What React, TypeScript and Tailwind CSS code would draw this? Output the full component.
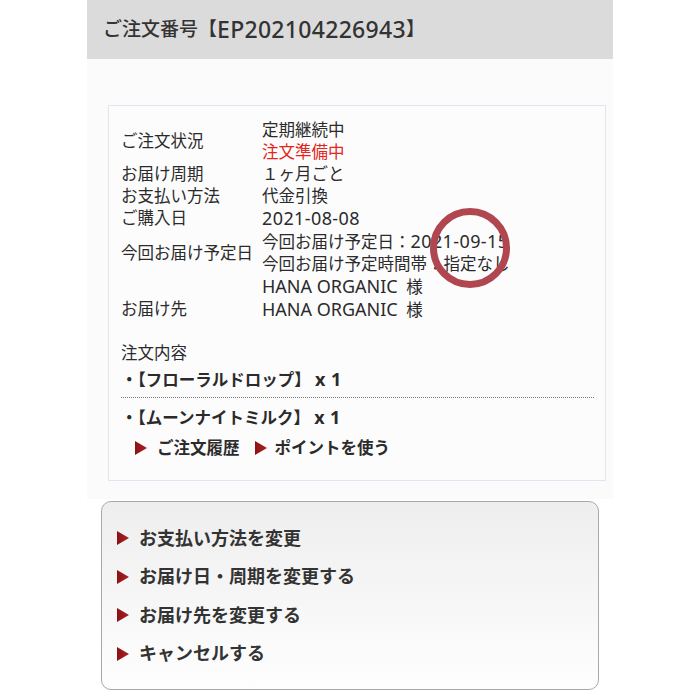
import React from "react";

const Tri = ({ className = "" }: { className?: string }) => (
  <svg width="12" height="14" viewBox="0 0 12 14" className={className}>
    <defs>
      <linearGradient id="tg" x1="0" y1="0" x2="1" y2="0">
        <stop offset="0" stopColor="#8a1214" />
        <stop offset="1" stopColor="#a82226" />
      </linearGradient>
    </defs>
    <polygon points="0,0 12,7 0,14" fill="url(#tg)" />
  </svg>
);

const L = ({ children, className = "" }: { children: React.ReactNode; className?: string }) => (
  <span className={"font-['Noto_Sans',sans-serif] text-[18px] tracking-[0.4px] " + className}>{children}</span>
);

export default function App() {
  return (
    <div className="relative w-[700px] h-[700px] bg-white text-[#2b2b2b] font-['Noto_Sans','Noto_Sans_CJK_JP',sans-serif]">
      <div className="ml-[87px] w-[526px]">
        <div className="h-[59px] bg-[#dcdbdc] pl-[16px] flex items-center text-[19px] font-medium text-[#333]">
          <span>ご注文番号【</span>
          <span className="font-['Noto_Sans',sans-serif] text-[23px] tracking-[0.3px]">EP202104226943</span>
          <span>】</span>
        </div>
        <div className="bg-[#fbfbfb] pt-[46px] pb-[18px] pl-[21px] pr-[7px]">
          <div className="h-[376px] border border-[#e3e4f1] bg-[#fcfcfd] pt-[13px] pl-[12px] pr-[11px] text-[16.5px] leading-[22px]">
            <div className="grid grid-cols-[141px_1fr]">
              <div className="self-center">ご注文状況</div>
              <div>
                <div>定期継続中</div>
                <div className="text-[#e3261c]">注文準備中</div>
              </div>
              <div>お届け周期</div>
              <div>１ヶ月ごと</div>
              <div>お支払い方法</div>
              <div>代金引換</div>
              <div>ご購入日</div>
              <div><L>2021-08-08</L></div>
              <div className="self-center">今回お届け予定日</div>
              <div>
                <div>今回お届け予定日：<L>2021-09-15</L></div>
                <div>今回お届け予定時間帯：指定なし</div>
              </div>
              <div></div>
              <div><L className="tracking-normal text-[17px]">HANA ORGANIC</L>&nbsp;&nbsp;様</div>
              <div>お届け先</div>
              <div><L className="tracking-normal text-[17px]">HANA ORGANIC</L>&nbsp;&nbsp;様</div>
            </div>
            <div className="mt-[21px]">注文内容</div>
            <div className="mt-[4px] pb-[6px] border-b border-dotted border-[#777] font-bold">
              ・【フローラルドロップ】 <L className="font-bold">x 1</L>
            </div>
            <div className="mt-[8px] font-bold">
              ・【ムーンナイトミルク】 <L className="font-bold">x 1</L>
            </div>
            <div className="mt-[8px] ml-[14px] flex items-center font-bold">
              <Tri />
              <span className="ml-[10px]">ご注文履歴</span>
              <Tri className="ml-[15px]" />
              <span className="ml-[8px]">ポイントを使う</span>
            </div>
          </div>
        </div>
        <div className="ml-[14px] mt-[2px] w-[498px] h-[189px] rounded-[10px] border border-[#a9a9a9] bg-gradient-to-b from-[#eeeeee] to-[#fefefe] pt-[17px] pl-[15px] text-[18px] font-bold text-[#333]">
          {["お支払い方法を変更", "お届け日・周期を変更する", "お届け先を変更する", "キャンセルする"].map((t) => (
            <div key={t} className="h-[38.5px] flex items-center">
              <Tri />
              <span className="ml-[10px]">{t}</span>
            </div>
          ))}
        </div>
      </div>
      <svg className="absolute left-[426px] top-[204px]" width="88" height="88" viewBox="0 0 88 88">
        <circle cx="44" cy="44" r="36.5" fill="none" stroke="#b0464f" strokeWidth="7" />
      </svg>
    </div>
  );
}
